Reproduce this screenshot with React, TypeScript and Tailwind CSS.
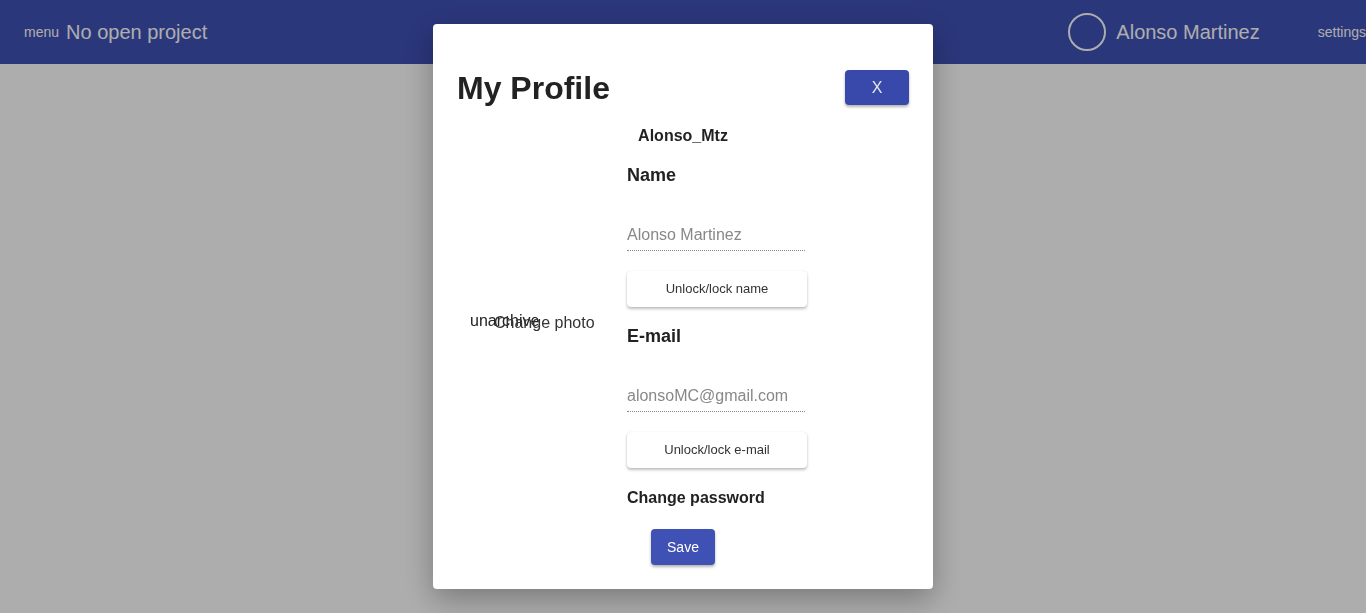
import React from "react";

const font = { fontFamily: '"Liberation Sans", Arial, sans-serif' };

function TopBar() {
  return (
    <header className="flex h-16 items-center overflow-hidden bg-[#3f51b5] text-white">
      <div className="flex items-center pl-6">
        <span className="text-sm">menu</span>
        <span className="ml-[7px] text-xl">No open project</span>
      </div>
      <div className="flex-1" />
      <div className="flex items-center">
        <div className="h-[38px] w-[38px] rounded-full border-2 border-white" />
        <span className="ml-[10px] text-xl">Alonso Martinez</span>
        <span className="ml-[58px] text-sm">settings</span>
      </div>
    </header>
  );
}

function Field({ label, value, action }: { label: string; value: string; action: string }) {
  return (
    <>
      <h3 className="mt-[18px] h-[22px] text-[18px] font-bold leading-[22px] text-[#222]">{label}</h3>
      <input
        readOnly
        placeholder={value}
        className="mt-[33px] h-[32px] w-[178px] border-b border-dotted border-[#888] bg-transparent text-base text-[#777] placeholder-[#888] outline-none"
      />
      <button
        type="button"
        className="mt-[20px] h-9 w-[180px] rounded bg-white text-[13px] text-[#333] shadow-[0_2px_3px_rgba(0,0,0,0.25),0_0_1px_rgba(0,0,0,0.15)]"
      >
        {action}
      </button>
    </>
  );
}

export default function App() {
  return (
    <div className="relative h-[613px] w-[1366px] overflow-hidden bg-white" style={font}>
      <TopBar />

      <div className="fixed inset-0 flex items-center justify-center bg-black/[0.32]">
        <div className="flex h-[565px] w-[500px] flex-col rounded bg-white px-6 pt-[46px] pb-6 shadow-[0_10px_30px_rgba(0,0,0,0.3)]">
          <div className="flex h-[35px] items-center justify-between">
            <h2 className="text-[32px] font-bold leading-none text-[#222]">My Profile</h2>
            <button
              type="button"
              className="h-[35px] w-16 rounded bg-[#3949ab] text-base text-[#e6e6e6] shadow-[0_2px_3px_rgba(0,0,0,0.3)]"
            >
              X
            </button>
          </div>

          <div className="mt-[21px] h-5 text-center text-base font-bold leading-5 text-[#222]">Alonso_Mtz</div>

          <div className="flex flex-1">
            <div className="relative w-[170px]">
              <span className="absolute left-[13px] top-[163px] text-base text-[#222]">unarchive</span>
              <span className="absolute left-[37px] top-[165px] text-base text-[#333]">Change photo</span>
            </div>
            <div className="flex flex-col items-start">
              <Field label="Name" value="Alonso Martinez" action="Unlock/lock name" />
              <Field label="E-mail" value="alonsoMC@gmail.com" action="Unlock/lock e-mail" />
              <div className="mt-[20px] h-5 text-base font-bold leading-5 text-[#222]">Change password</div>
              <button
                type="button"
                className="ml-6 mt-[21px] h-9 w-16 rounded bg-[#3f51b5] text-sm text-white shadow-[0_2px_3px_rgba(0,0,0,0.3)]"
              >
                Save
              </button>
            </div>
          </div>
        </div>
      </div>
    </div>
  );
}
